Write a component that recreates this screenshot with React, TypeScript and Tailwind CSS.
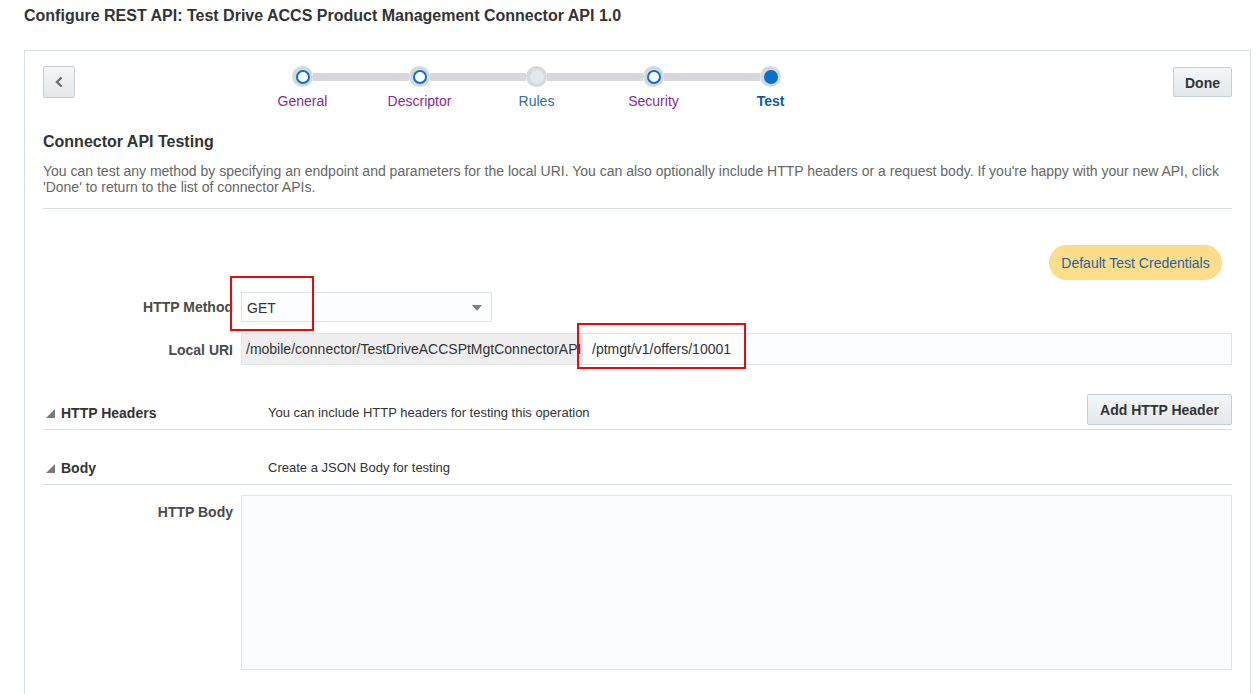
import React from "react";

type Stop = { label: string; state: "visited" | "unvisited" | "current" };

const stops: Stop[] = [
  { label: "General", state: "visited" },
  { label: "Descriptor", state: "visited" },
  { label: "Rules", state: "unvisited" },
  { label: "Security", state: "visited" },
  { label: "Test", state: "current" },
];

function Triangle() {
  return (
    <svg width="9" height="9" viewBox="0 0 9 9" className="shrink-0">
      <polygon points="9,0 9,9 0,9" fill="#7a7a7a" />
    </svg>
  );
}

function Train() {
  return (
    <div className="ml-[169px] grid w-[585px] grid-cols-5">
      {stops.map((s, i) => (
        <div key={s.label} className="flex flex-col items-center">
          <div className="flex h-[21px] w-full items-center">
            <div className={`h-2 flex-1 ${i === 0 ? "" : "bg-[#d6d8db]"}`} />
            <div className="flex h-[21px] w-[21px] items-center justify-center rounded-full bg-[#d6d8db]">
              {s.state === "visited" && (
                <div className="h-[14px] w-[14px] rounded-full border-2 border-[#0572ce] bg-white" />
              )}
              {s.state === "unvisited" && (
                <div className="h-[14px] w-[14px] rounded-full bg-[#e4e8ea]" />
              )}
              {s.state === "current" && (
                <div className="h-[14px] w-[14px] rounded-full bg-[#0572ce]" />
              )}
            </div>
            <div className={`h-2 flex-1 ${i === stops.length - 1 ? "" : "bg-[#d6d8db]"}`} />
          </div>
          <span
            className={`mt-[6px] text-[14px] leading-[16px] ${
              s.state === "visited"
                ? "text-[#8a2a97]"
                : s.state === "unvisited"
                ? "text-[#2b6fb5]"
                : "font-bold text-[#0b5ca8]"
            }`}
          >
            {s.label}
          </span>
        </div>
      ))}
    </div>
  );
}

const btn =
  "rounded-[2px] border border-[#c4ced7] bg-gradient-to-b from-[#f4f6f7] to-[#e4e8ea] font-bold text-[#333]";

export default function App() {
  return (
    <div className="h-[694px] overflow-hidden bg-white font-['Liberation_Sans',Arial,sans-serif] text-[#333]">
      <h1 className="pl-6 pt-[7px] text-[16px] font-bold leading-[18px] text-[#333]">
        Configure REST API: Test Drive ACCS Product Management Connector API 1.0
      </h1>

      <div className="ml-6 mr-2 mt-[25px] border border-[#d6dfe6] px-[18px] pb-10 pt-[15px]">
        {/* top bar */}
        <div className="flex h-[43px] items-start">
          <button className={`${btn} flex h-8 w-8 items-center justify-center`}>
            <svg width="10" height="12" viewBox="0 0 10 12">
              <path d="M7.5 1.5 L3 6 L7.5 10.5" fill="none" stroke="#6f6f6f" strokeWidth="2.4" />
            </svg>
          </button>
          <Train />
          <button className={`${btn} ml-auto mt-px h-[30px] w-[59px] pt-[2px] text-[14px]`}>
            Done
          </button>
        </div>

        <h2 className="mt-[23px] text-[16px] font-bold leading-[20px] text-[#333]">
          Connector API Testing
        </h2>
        <p className="mt-[11px] border-b border-[#d6dfe6] pb-[13px] text-[14px] leading-[16px] text-[#666]">
          You can test any method by specifying an endpoint and parameters for the local URI. You
          can also optionally include HTTP headers or a request body. If you're happy with your new
          API, click 'Done' to return to the list of connector APIs.
        </p>

        <div className="mt-9 flex justify-end pr-[10px]">
          <button className="h-[35px] w-[173px] rounded-full bg-[#fbdd8a] pt-px text-[14px] text-[#1f63a9]">
            Default Test Credentials
          </button>
        </div>

        {/* HTTP Method */}
        <div className="mt-3 flex items-center">
          <label className="w-[190px] pt-px text-right text-[14px] font-bold text-[#4a4a4a]">
            HTTP Method
          </label>
          <div className="relative ml-2">
            <div className="flex h-[30px] w-[251px] items-center justify-between border border-[#dfe4e7] bg-[#fcfdfe] pl-[5px] pr-[9px] pt-[2px] text-[14px] text-[#333]">
              <span>GET</span>
              <svg width="10" height="6" viewBox="0 0 10 6">
                <polygon points="0,0 10,0 5,6" fill="#7f7f7f" />
              </svg>
            </div>
            <div className="pointer-events-none absolute left-[-11px] top-[-16px] h-[55px] w-[84px] border-2 border-[#e8090b]" />
          </div>
        </div>

        {/* Local URI */}
        <div className="mt-[11px] flex items-center">
          <label className="w-[190px] pt-[2px] text-right text-[14px] font-bold text-[#4a4a4a]">
            Local URI
          </label>
          <div className="ml-2 flex h-8 flex-1">
            <div className="flex w-[341px] items-center overflow-hidden whitespace-nowrap border border-[#e4e4e4] bg-[#eeeeee] pl-[4px] pt-px text-[14px] text-[#333]">
              /mobile/connector/TestDriveACCSPtMgtConnectorAPI
            </div>
            <div className="relative flex flex-1 items-center border border-[#dfe4e7] bg-[#fcfdfe] pl-[9px] pt-px text-[14px] text-[#333]">
              /ptmgt/v1/offers/10001
              <div className="pointer-events-none absolute left-[-6px] top-[-11px] h-[46px] w-[169px] border-2 border-[#e8090b]" />
            </div>
          </div>
        </div>

        {/* HTTP Headers */}
        <div className="mt-[29px] flex items-start border-b border-[#d6dfe6] pb-1">
          <div className="mt-[11px] flex w-[225px] items-center gap-[6px] pl-[3px] text-[14px] font-bold leading-[16px] text-[#333]">
            <Triangle />
            HTTP Headers
          </div>
          <span className="mt-[11px] text-[13px] leading-[16px] text-[#333]">
            You can include HTTP headers for testing this operation
          </span>
          <button className={`${btn} ml-auto h-[31px] w-[145px] pt-[2px] text-[14px]`}>
            Add HTTP Header
          </button>
        </div>

        {/* Body */}
        <div className="mt-[30px] flex items-center border-b border-[#d6dfe6] pb-2">
          <div className="flex w-[225px] items-center gap-[6px] pl-[3px] text-[14px] font-bold leading-[16px] text-[#333]">
            <Triangle />
            Body
          </div>
          <span className="text-[13px] leading-[16px] text-[#333]">
            Create a JSON Body for testing
          </span>
        </div>

        {/* HTTP Body */}
        <div className="mt-[10px] flex items-start">
          <label className="w-[190px] pt-[9px] text-right text-[14px] font-bold leading-[16px] text-[#4a4a4a]">
            HTTP Body
          </label>
          <textarea className="ml-2 h-[175px] flex-1 resize-none border border-[#dfe4e7] bg-[#fbfcfd] outline-none" />
        </div>
      </div>
    </div>
  );
}
